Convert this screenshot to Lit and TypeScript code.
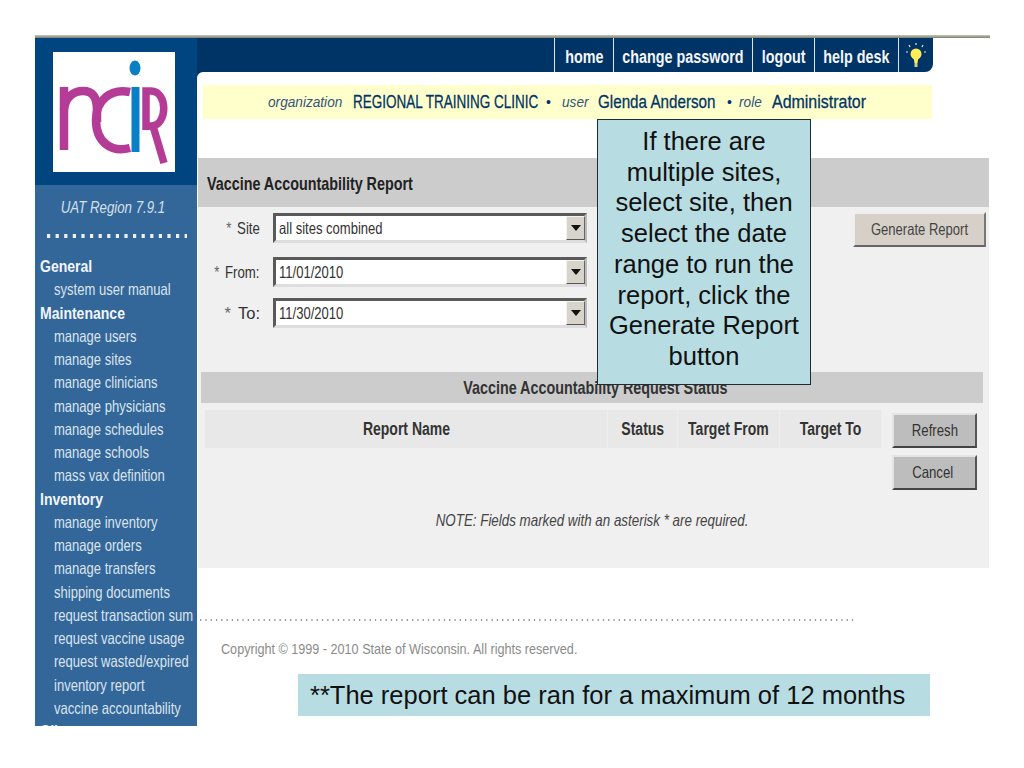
import { LitElement, html, css } from "lit";
import { customElement } from "lit/decorators.js";

const GROUPS: [string, string[]][] = [
  ["General", ["system user manual"]],
  ["Maintenance", ["manage users", "manage sites", "manage clinicians", "manage physicians", "manage schedules", "manage schools", "mass vax definition"]],
  ["Inventory", ["manage inventory", "manage orders", "manage transfers", "shipping documents", "request transaction sum", "request vaccine usage", "request wasted/expired", "inventory report", "vaccine accountability"]],
  ["Clients", []],
];

@customElement("app-root")
export class AppRoot extends LitElement {
  static styles = css`
    :host { display: block; width: 1024px; height: 768px; background: #fff; position: relative; overflow: hidden; font-family: "Liberation Sans", Arial, sans-serif; color: #222; }
    .s { display: inline-block; white-space: nowrap; transform: scaleX(var(--s, 0.8)); transform-origin: center; }
    .left .s, .s.left { transform-origin: left center; }
    .right .s { transform-origin: right center; }
    .frame { margin: 35px 0 0 35px; width: 955px; height: 691px; display: flex; flex-direction: column; overflow: hidden; }
    .strip { height: 3px; flex: none; background: linear-gradient(#c9c9b8, #7d7d74); }
    .cols { flex: 1; display: flex; min-height: 0; }
    .side { width: 162px; flex: none; background: #336699; color: #e6edf5; overflow: hidden; }
    .brand { height: 147px; background: #004480; padding: 14px 0 0 18px; box-sizing: border-box; }
    .logo { display: block; width: 122px; height: 120px; background: #fff; }
    .region { --s: 0.78; text-align: center; font-style: italic; font-size: 17px; line-height: 20px; padding: 13px 6px 0 0; color: #d5e0ec; }
    .dots { display: block; margin: 16px 0 0 12px; }
    .nav { padding: 17px 0 0 5px; }
    .nav div { height: 23.25px; line-height: 23.25px; font-size: 16.5px; white-space: nowrap; }
    .nav .h { --s: 0.85; font-weight: bold; color: #f2f5f9; }
    .nav .i { --s: 0.79; padding-left: 13.5px; color: #dbe4ef; }
    .main { flex: 1; min-width: 0; background: #fff; display: flex; flex-direction: column; }
    .top { height: 34px; width: 736px; flex: none; box-sizing: border-box; padding-left: 357px; background: #003366; border-radius: 0 0 8px 0; display: grid; grid-template-columns: 59px 139px 62px 84px 35px; color: #f4f6fa; font-weight: bold; font-size: 17.5px; --s: 0.82; }
    .top > span { display: flex; align-items: center; justify-content: center; border-left: 1px solid #dfe6ee; padding-top: 5px; box-sizing: border-box; }
    .top > .bulb { padding-top: 0; }
    .round { background: #fff; border-radius: 6px 0 0 0; flex: 1; display: flex; flex-direction: column; min-height: 0; }
    .corner { background: linear-gradient(#003366, #003366) no-repeat left top / 6px 6px; flex: 1; display: flex; flex-direction: column; min-height: 0; }
    .yellow { margin: 13px 0 0 6px; width: 729px; height: 34px; box-sizing: border-box; background: #ffffcc; display: flex; align-items: center; padding-left: 65px; color: #003366; }
    .yellow > span { flex: none; display: block; line-height: 34px; white-space: nowrap; }
    .yellow i { font-size: 15.5px; color: #33557a; --s: 0.88; }
    .yellow b { font-size: 19px; font-weight: normal; -webkit-text-stroke: 0.3px #003366; --s: 0.8; }
    .w1 { width: 85px; }
    .yellow .w2 { width: 193px; }
    .yellow .w2 b { --s: 0.71; }
    .w3 { width: 16px; font-size: 14px; }
    .w4 { width: 36px; }
    .w5 { width: 129px; }
    .w6 { width: 12px; font-size: 14px; }
    .w7 { width: 33px; }
    .yellow .w8 { width: 94px; }
    .yellow .w8 b { --s: 0.84; }
    .title { --s: 0.775; margin: 39px 0 0 1px; width: 791px; height: 49px; box-sizing: border-box; background: #cccccc; display: flex; align-items: center; padding: 3px 0 0 9px; font-weight: bold; font-size: 18.5px; color: #222; }
    .panel { margin-left: 1px; width: 791px; height: 361px; background: #f0f0f0; display: flex; flex-direction: column; box-sizing: border-box; }
    .form { height: 165px; display: flex; }
    .fields { display: grid; grid-template-columns: 62px 314px; column-gap: 13px; grid-template-rows: 44px 41px 30px; padding-top: 6px; align-content: start; }
    .lab { --s: 0.8; text-align: right; font-size: 16.5px; line-height: 30px; color: #333; white-space: nowrap; }
    .lab.to { --s: 1; }
    .lab em { font-style: normal; color: #666; margin-right: 7px; }
    .sel { --s: 0.79; box-sizing: border-box; background: #fff; border: 3px solid; border-color: #5a5a5a #bbb #ddd #5a5a5a; display: flex; align-items: center; font-size: 16.5px; padding-left: 3px; color: #333; position: relative; height: 30px; }
    .arrow { position: absolute; right: -1px; top: 0; bottom: 0; width: 19px; background: #d8d4cc; border: 1px solid; border-color: #f4f4f0 #666 #555 #f4f4f0; box-sizing: border-box; display: flex; align-items: center; justify-content: center; }
    .arrow::after { content: ""; border: 5px solid transparent; border-top: 6px solid #111; border-bottom: 0; }
    .gen { --s: 0.79; margin: 5px 3px 0 auto; width: 133px; height: 35px; box-sizing: border-box; background: #d6d0c8; border: 2px solid; border-color: #eee #777 #666 #eee; font-size: 16.5px; color: #444; display: flex; align-items: center; justify-content: center; }
    .status { --s: 0.776; margin: 0 6px 0 3px; height: 31px; background: #cccccc; text-align: center; line-height: 32px; font-weight: bold; font-size: 18.5px; color: #333; padding-left: 6px; }
    .table { display: flex; margin: 7px 0 0 7px; gap: 10px; }
    .head { --s: 0.8; display: grid; grid-template-columns: 403px 70px 102px 102px; width: 677px; height: 36px; font-weight: bold; font-size: 17.5px; color: #333; text-align: center; line-height: 38px; }
    .head > span { background: #e8e8e8; border-right: 1px solid #eeeeee; box-sizing: border-box; }
    .btns { display: flex; flex-direction: column; gap: 7px; padding-top: 3px; }
    .btn { --s: 0.8; width: 85px; height: 35px; box-sizing: border-box; background: #bdbdbd; border: 2px solid; border-color: #e4e4e4 #555 #444 #e4e4e4; display: flex; align-items: center; justify-content: center; font-size: 16.5px; color: #333; }
    .btn.cancel { padding-right: 4px; }
    .note { --s: 0.81; margin: 20px 0 0 -3px; line-height: 20px; text-align: center; font-style: italic; font-size: 16.5px; color: #444; }
    .rule { display: block; margin: 51px 0 0 3px; }
    .copy { --s: 0.87; margin: 20px 0 0 24px; font-size: 14.5px; color: #8b8b8b; }
    .call { position: absolute; background: #b7dde3; color: #111; box-sizing: border-box; font-size: 25.5px; }
    .c1 { left: 597px; top: 119px; width: 214px; height: 266px; border: 1px solid #1e2d33; text-align: center; line-height: 30.7px; padding: 6px 6px 0; }
    .c2 { left: 298px; top: 674px; width: 632px; height: 42px; line-height: 42px; padding-left: 12px; white-space: nowrap; }
  `;

  render() {
    return html`
      <div class="frame">
        <div class="strip"></div>
        <div class="cols">
          <div class="side">
            <div class="brand">
              <svg class="logo" viewBox="0 0 122 120" fill="none">
                <g stroke="#b43c96" stroke-width="8.5">
                  <path d="M11 98 V35" />
                  <path d="M11 58 C12 44 22 39 30 39 C40 39 44 46 44 58 V70" />
                  <path d="M77 40 C58 36 43 48 43 68 C43 90 58 101 77 96" />
                  <path d="M93 78 V39 H98 C115 39 115 74 98 74 H92" stroke-width="7.5" />
                  <path d="M100 74 L111 111" stroke-width="7.5" />
                </g>
                <path d="M82.5 35 V100" stroke="#0a80c4" stroke-width="8" />
                <ellipse cx="82" cy="16" rx="5.5" ry="7.5" fill="#0a80c4" />
              </svg>
            </div>
            <div class="region"><span class="s">UAT Region 7.9.1</span></div>
            <svg class="dots" width="140" height="4" viewBox="0 0 140 4">
              <line x1="0" y1="2" x2="140" y2="2" stroke="#eef2f7" stroke-width="4" stroke-dasharray="3.2 5.4" />
            </svg>
            <div class="nav left">
              ${GROUPS.map(([h, items]) => html`<div class="h"><span class="s">${h}</span></div>${items.map((t) => html`<div class="i"><span class="s">${t}</span></div>`)}`)}
            </div>
          </div>
          <div class="main">
            <div class="top">
              <span><span class="s">home</span></span><span><span class="s">change password</span></span><span><span class="s">logout</span></span><span><span class="s">help desk</span></span>
              <span class="bulb">
                <svg width="24" height="32" viewBox="0 0 24 32" fill="none">
                  <circle cx="12" cy="15" r="5.5" fill="#ffee55" />
                  <path d="M9.5 18 L10.5 24 H13.5 L14.5 18 Z" fill="#ffee55" />
                  <rect x="10.5" y="24" width="3" height="4" fill="#d8d080" />
                  <path d="M12 4 V6 M5 6 L6 8 M19 6 L18 8 M2 13 H4 M20 13 H22" stroke="#e6ecb0" stroke-width="1.2" />
                </svg>
              </span>
            </div>
            <div class="corner">
              <div class="round">
                <div class="yellow left">
                  <span class="w1"><i class="s">organization</i></span>
                  <span class="w2"><b class="s">REGIONAL TRAINING CLINIC</b></span>
                  <span class="w3">•</span>
                  <span class="w4"><i class="s">user</i></span>
                  <span class="w5"><b class="s">Glenda Anderson</b></span>
                  <span class="w6">•</span>
                  <span class="w7"><i class="s">role</i></span>
                  <span class="w8"><b class="s">Administrator</b></span>
                </div>
                <div class="title left"><span class="s">Vaccine Accountability Report</span></div>
                <div class="panel">
                  <div class="form">
                    <div class="fields">
                      <div class="lab right"><span class="s"><em>*</em>Site</span></div>
                      <div class="sel left"><span class="s">all sites combined</span><span class="arrow"></span></div>
                      <div class="lab right"><span class="s"><em>*</em>From:</span></div>
                      <div class="sel left"><span class="s">11/01/2010</span><span class="arrow"></span></div>
                      <div class="lab to right"><span class="s"><em>*</em>To:</span></div>
                      <div class="sel left"><span class="s">11/30/2010</span><span class="arrow"></span></div>
                    </div>
                    <div class="gen"><span class="s">Generate Report</span></div>
                  </div>
                  <div class="status"><span class="s">Vaccine Accountability Request Status</span></div>
                  <div class="table">
                    <div class="head">
                      <span><span class="s">Report Name</span></span><span><span class="s">Status</span></span><span><span class="s">Target From</span></span><span><span class="s">Target To</span></span>
                    </div>
                    <div class="btns">
                      <div class="btn"><span class="s">Refresh</span></div>
                      <div class="btn cancel"><span class="s">Cancel</span></div>
                    </div>
                  </div>
                  <div class="note"><span class="s">NOTE: Fields marked with an asterisk * are required.</span></div>
                </div>
                <svg class="rule" width="655" height="2" viewBox="0 0 655 2">
                  <line x1="0" y1="1" x2="655" y2="1" stroke="#999" stroke-width="2" stroke-dasharray="1.3 4" />
                </svg>
                <div class="copy left"><span class="s">Copyright © 1999 - 2010 State of Wisconsin. All rights reserved.</span></div>
              </div>
            </div>
          </div>
        </div>
      </div>
      <div class="call c1">If there are multiple sites, select site, then select the date range to run the report, click the Generate Report button</div>
      <div class="call c2">**The report can be ran for a maximum of 12 months</div>
    `;
  }
}
